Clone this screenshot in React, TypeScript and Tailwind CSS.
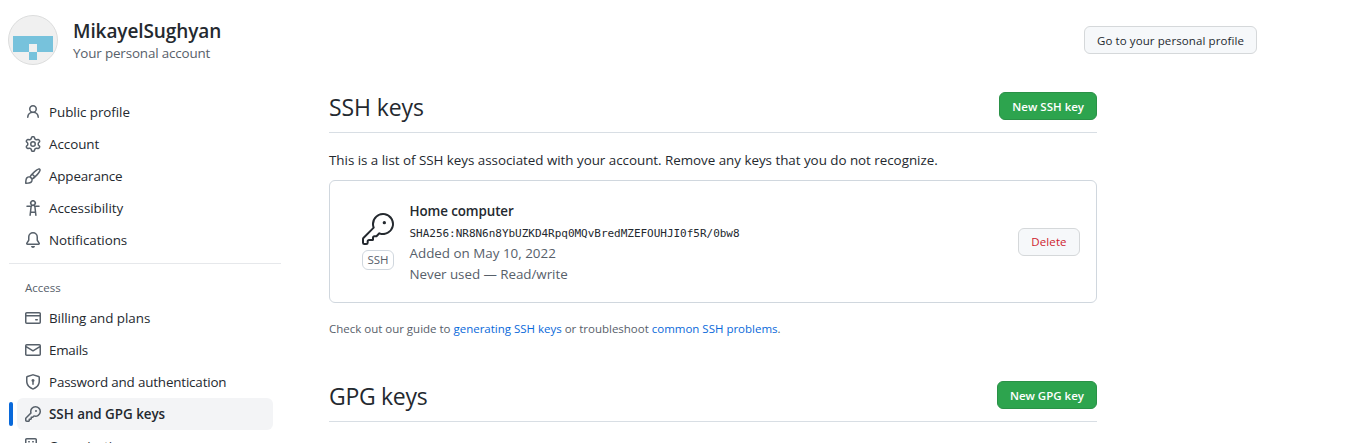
import React from "react";
import { GoKey } from "react-icons/go";

const paths = {
  person:
    "M10.561 8.073a6.005 6.005 0 0 1 3.432 5.142.75.75 0 1 1-1.498.07 4.5 4.5 0 0 0-8.99 0 .75.75 0 0 1-1.498-.07 6.004 6.004 0 0 1 3.431-5.142 3.999 3.999 0 1 1 5.123 0ZM10.5 5a2.5 2.5 0 1 0-5 0 2.5 2.5 0 0 0 5 0Z",
  gear:
    "M7.429 1.525a6.593 6.593 0 011.142 0c.036.003.108.036.137.146l.289 1.105c.147.56.55.967.997 1.189.174.086.341.183.501.29.417.278.97.423 1.53.27l1.102-.303c.11-.03.175.016.195.046.219.31.41.641.573.989.014.031.022.11-.059.19l-.815.806c-.411.406-.562.957-.53 1.456a4.588 4.588 0 010 .582c-.032.499.119 1.05.53 1.456l.815.806c.08.08.073.159.059.19a6.494 6.494 0 01-.573.99c-.02.029-.086.074-.195.045l-1.103-.303c-.559-.153-1.112-.008-1.529.27-.16.107-.327.204-.5.29-.449.222-.851.628-.998 1.189l-.289 1.105c-.029.11-.101.143-.137.146a6.613 6.613 0 01-1.142 0c-.036-.003-.108-.037-.137-.146l-.289-1.105c-.147-.56-.55-.967-.997-1.189a4.502 4.502 0 01-.501-.29c-.417-.278-.97-.423-1.53-.27l-1.102.303c-.11.03-.175-.016-.195-.046a6.492 6.492 0 01-.573-.989c-.014-.031-.022-.11.059-.19l.815-.806c.411-.406.562-.957.53-1.456a4.587 4.587 0 010-.582c.032-.499-.119-1.05-.53-1.456l-.815-.806c-.08-.08-.073-.159-.059-.19a6.44 6.44 0 01.573-.99c.02-.029.086-.075.195-.045l1.103.303c.559.153 1.112.008 1.529-.27.16-.107.327-.204.5-.29.449-.222.851-.628.998-1.189l.289-1.105c.029-.11.101-.143.137-.146zM8 0c-.236 0-.47.01-.701.03-.743.065-1.29.615-1.458 1.261l-.29 1.106c-.017.066-.078.158-.211.224a5.994 5.994 0 00-.668.386c-.123.082-.233.09-.3.071L3.27 2.776c-.644-.177-1.392.02-1.82.63a7.977 7.977 0 00-.704 1.217c-.315.675-.111 1.422.363 1.891l.815.806c.05.048.098.147.088.294a6.084 6.084 0 000 .772c.01.147-.038.246-.088.294l-.815.806c-.474.469-.678 1.216-.363 1.891.2.428.436.835.704 1.218.428.609 1.176.806 1.82.63l1.103-.303c.066-.019.176-.011.299.071.213.143.436.272.668.386.133.066.194.158.212.224l.289 1.106c.169.646.715 1.196 1.458 1.26a8.094 8.094 0 001.402 0c.743-.064 1.29-.614 1.458-1.26l.29-1.106c.017-.066.078-.158.211-.224a5.98 5.98 0 00.668-.386c.123-.082.233-.09.3-.071l1.102.302c.644.177 1.392-.02 1.82-.63.268-.382.505-.789.704-1.217.315-.675.111-1.422-.364-1.891l-.814-.806c-.05-.048-.098-.147-.088-.294a6.1 6.1 0 000-.772c-.01-.147.039-.246.088-.294l.814-.806c.475-.469.679-1.216.364-1.891a7.992 7.992 0 00-.704-1.218c-.428-.609-1.176-.806-1.82-.63l-1.103.303c-.066.019-.176.011-.299-.071a5.991 5.991 0 00-.668-.386c-.133-.066-.194-.158-.212-.224L10.16 1.29C9.99.645 9.444.095 8.701.031A8.094 8.094 0 008 0zm1.5 8a1.5 1.5 0 11-3 0 1.5 1.5 0 013 0zM11 8a3 3 0 11-6 0 3 3 0 016 0z",
  brush:
    "M11.134 1.535C9.722 2.562 8.16 4.057 6.889 5.312 5.8 6.387 5.041 7.401 4.575 8.294a3.745 3.745 0 00-3.227 1.054c-.43.431-.69 1.066-.86 1.657a11.982 11.982 0 00-.358 1.914A21.263 21.263 0 000 15.203v.054l.75-.007-.007.75h.054a14.404 14.404 0 00.654-.012 21.243 21.243 0 001.63-.118c.62-.07 1.3-.18 1.914-.357.592-.17 1.226-.43 1.657-.861a3.745 3.745 0 001.055-3.217c.908-.461 1.942-1.216 3.04-2.3 1.279-1.262 2.764-2.825 3.775-4.249.501-.706.923-1.428 1.125-2.096.2-.659.235-1.469-.368-2.07-.606-.607-1.42-.55-2.069-.34-.66.213-1.376.646-2.076 1.155zm-3.95 8.48a3.76 3.76 0 00-1.19-1.192 9.758 9.758 0 011.161-1.607l1.658 1.658a9.853 9.853 0 01-1.63 1.142zM.742 16l.007-.75-.75.008A.75.75 0 00.743 16zM12.016 2.749c-1.224.89-2.605 2.189-3.822 3.384l1.718 1.718c1.21-1.205 2.51-2.597 3.387-3.833.47-.662.78-1.227.912-1.662.134-.444.032-.551.009-.575h-.001V1.78c-.014-.014-.112-.113-.548.027-.432.14-.995.462-1.655.942zM1.62 13.089a19.56 19.56 0 00-.104 1.395 19.55 19.55 0 001.396-.104 10.528 10.528 0 001.668-.309c.526-.151.856-.325 1.011-.48a2.25 2.25 0 00-3.182-3.182c-.155.155-.329.485-.48 1.01a10.515 10.515 0 00-.309 1.67z",
  accessibility:
    "M9.923 5.302c.063.063.122.129.178.198H14A.75.75 0 0 1 14 7h-3.3l.578 5.163.362 2.997a.75.75 0 0 1-1.49.18L9.868 13H6.132l-.282 2.34a.75.75 0 0 1-1.49-.18l.362-2.997L5.3 7H2a.75.75 0 0 1 0-1.5h3.9a2.54 2.54 0 0 1 .176-.198 3 3 0 1 1 3.847 0ZM9.2 7.073h-.001a1.206 1.206 0 0 0-2.398 0L6.305 11.5h3.39ZM9.5 3a1.5 1.5 0 1 0-3.001.001A1.5 1.5 0 0 0 9.5 3Z",
  bell:
    "M8 16a2 2 0 001.985-1.75c.017-.137-.097-.25-.235-.25h-3.5c-.138 0-.252.113-.235.25A2 2 0 008 16zM3 5a5 5 0 0110 0v2.947c0 .05.015.098.042.139l1.703 2.555A1.518 1.518 0 0113.482 13H2.518a1.518 1.518 0 01-1.263-2.36l1.703-2.554A.25.25 0 003 7.947V5zm5-3.5A3.5 3.5 0 004.5 5v2.947c0 .346-.102.683-.294.97l-1.703 2.556a.018.018 0 00-.003.01l.001.006c0 .002.002.004.004.006a.017.017 0 00.006.004l.007.001h10.964l.007-.001a.016.016 0 00.006-.004.016.016 0 00.004-.006l.001-.007a.017.017 0 00-.003-.01l-1.703-2.554a1.75 1.75 0 01-.294-.97V5A3.5 3.5 0 008 1.5z",
  card:
    "M10.75 9a.75.75 0 000 1.5h1.5a.75.75 0 000-1.5h-1.5zM0 3.75C0 2.784.784 2 1.75 2h12.5c.966 0 1.75.784 1.75 1.75v8.5A1.75 1.75 0 0114.25 14H1.75A1.75 1.75 0 010 12.25v-8.5zm14.5 0V5h-13V3.75a.25.25 0 01.25-.25h12.5a.25.25 0 01.25.25zm0 2.75h-13v5.75c0 .138.112.25.25.25h12.5a.25.25 0 00.25-.25V6.5z",
  mail:
    "M1.75 2A1.75 1.75 0 000 3.75v.736a.75.75 0 000 .027v7.737C0 13.216.784 14 1.75 14h12.5A1.75 1.75 0 0016 12.25v-8.5A1.75 1.75 0 0014.25 2H1.75zM14.5 4.07v-.32a.25.25 0 00-.25-.25H1.75a.25.25 0 00-.25.25v.32L8 7.88l6.5-3.81zm-13 1.74v6.441c0 .138.112.25.25.25h12.5a.25.25 0 00.25-.25V5.809L8.38 9.397a.75.75 0 01-.76 0L1.5 5.809z",
  shield:
    "M8.533.133a1.75 1.75 0 00-1.066 0l-5.25 1.68A1.75 1.75 0 001 3.48V7c0 1.566.32 3.182 1.303 4.682.983 1.498 2.585 2.813 5.032 3.855a1.7 1.7 0 001.33 0c2.447-1.042 4.049-2.357 5.032-3.855C14.68 10.182 15 8.566 15 7V3.48a1.75 1.75 0 00-1.217-1.667L8.533.133zm-.61 1.429a.25.25 0 01.153 0l5.25 1.68a.25.25 0 01.174.238V7c0 1.358-.275 2.666-1.057 3.86-.784 1.194-2.121 2.34-4.366 3.297a.2.2 0 01-.154 0c-2.245-.956-3.582-2.104-4.366-3.298C2.775 9.666 2.5 8.36 2.5 7V3.48a.25.25 0 01.174-.237l5.25-1.68zM9.5 6.5a1.5 1.5 0 01-.75 1.3v2.45a.75.75 0 01-1.5 0V7.8A1.5 1.5 0 119.5 6.5z",
  key:
    "M6.5 5.5a4 4 0 112.731 3.795.75.75 0 00-.768.18L7.44 10.5H6.25a.75.75 0 00-.75.75v1.19l-.06.06H4.25a.75.75 0 00-.75.75v1.19l-.06.06H1.75a.25.25 0 01-.25-.25v-1.69l5.024-5.023a.75.75 0 00.181-.768A3.995 3.995 0 016.5 5.5zm4-5.5a5.5 5.5 0 00-5.348 6.788L.22 11.72a.75.75 0 00-.22.53v2C0 15.216.784 16 1.75 16h2a.75.75 0 00.53-.22l.5-.5a.75.75 0 00.22-.53V14h.75a.75.75 0 00.53-.22l.5-.5a.75.75 0 00.22-.53V12h.75a.75.75 0 00.53-.22l.932-.932A5.5 5.5 0 1010.5 0zm.5 6a1 1 0 100-2 1 1 0 000 2z",
  organization:
    "M1.75 0h8.5C11.216 0 12 .784 12 1.75V16H0V1.75C0 .784.784 0 1.75 0zm0 1.5a.25.25 0 00-.25.25V14.5h9V1.75a.25.25 0 00-.25-.25zM3.75 3h.5a.75.75 0 010 1.5h-.5a.75.75 0 010-1.5zm4 0h.5a.75.75 0 010 1.5h-.5a.75.75 0 010-1.5zm-4 3h.5a.75.75 0 010 1.5h-.5a.75.75 0 010-1.5zm4 0h.5a.75.75 0 010 1.5h-.5a.75.75 0 010-1.5z",
};

type IconName = keyof typeof paths;

function Icon({ name }: { name: IconName }) {
  return (
    <svg viewBox="0 0 16 16" className="size-4 shrink-0 fill-[#57606a]">
      <path fillRule="evenodd" d={paths[name]} />
    </svg>
  );
}

type Item = { icon: IconName; label: string; track: string; active?: boolean };

const general: Item[] = [
  { icon: "person", label: "Public profile", track: "tracking-[-0.05px]" },
  { icon: "gear", label: "Account", track: "tracking-[-0.05px]" },
  { icon: "brush", label: "Appearance", track: "tracking-[-0.15px]" },
  { icon: "accessibility", label: "Accessibility", track: "tracking-[-0.05px]" },
  { icon: "bell", label: "Notifications", track: "tracking-[-0.05px]" },
];

const access: Item[] = [
  { icon: "card", label: "Billing and plans", track: "tracking-[-0.05px]" },
  { icon: "mail", label: "Emails", track: "tracking-[-0.25px]" },
  { icon: "shield", label: "Password and authentication", track: "tracking-[-0.17px]" },
  { icon: "key", label: "SSH and GPG keys", track: "tracking-[-0.03px]", active: true },
  { icon: "organization", label: "Organizations", track: "tracking-[-0.1px]" },
];

function NavItem({ icon, label, track, active }: Item) {
  return (
    <li className="flex h-8 items-center">
      <span className={active ? "h-6 w-1 rounded-md bg-[#0969da]" : "h-6 w-1"} />
      <a
        className={
          active
            ? "ml-1 flex h-8 w-64 shrink-0 items-center gap-2 rounded-md bg-[#f3f4f6] px-2 font-semibold"
            : "ml-1 flex h-8 w-64 shrink-0 items-center gap-2 px-2"
        }
      >
        <Icon name={icon} />
        <span className={`whitespace-nowrap leading-5 ${track}`}>{label}</span>
      </a>
    </li>
  );
}

function SectionHead({ title, action, track }: { title: string; action: string; track: string }) {
  return (
    <div className="flex h-[41px] items-start justify-between border-b border-[#d8dee4]">
      <h2 className={`text-[23px] leading-[30px] ${track}`}>{title}</h2>
      <button className="h-7 rounded-md border border-[#2a9147] bg-[#2da44e] px-3 pt-px text-[11.5px] font-semibold whitespace-nowrap text-white">
        {action}
      </button>
    </div>
  );
}

export default function App() {
  return (
    <div className="h-[443px] w-[1367px] overflow-hidden bg-white font-['Open_Sans','Noto_Sans',sans-serif] text-[13.4px] text-[#24292f]">
      <header className="flex h-24 items-start pt-[15px] pl-2">
        <svg viewBox="0 0 50 50" className="size-[50px]">
          <circle cx="25" cy="25" r="24.5" fill="#f0f0f0" stroke="#dcdddd" />
          <path fill="#77c2dc" d="M5 21h40v16H29v-8h-8v8H5zM21 37h8v8h-8z" />
        </svg>
        <div className="ml-[15px] pt-[3px]">
          <h1 className="text-[19px] leading-[26px] font-semibold tracking-[-0.1px]">MikayelSughyan</h1>
          <p className="leading-[18px] tracking-[-0.15px] text-[#57606a]">Your personal account</p>
        </div>
        <button className="mt-[11px] mr-[110px] ml-auto h-7 w-[173px] rounded-md border border-[#d5d8da] bg-[#f6f8fa] pt-px text-[11.5px] font-medium tracking-[0.1px] whitespace-nowrap">
          Go to your personal profile
        </button>
      </header>
      <div className="flex items-start">
        <nav className="w-[281px] pl-[9px]">
          <ul>
            {general.map((item) => (
              <NavItem key={item.label} {...item} />
            ))}
          </ul>
          <div className="mt-[7px] h-px bg-[#e6e8eb]" />
          <h3 className="h-[38px] pt-[15px] pl-4 text-[11.5px] leading-[18px] font-medium text-[#57606a]">Access</h3>
          <ul>
            {access.map((item) => (
              <NavItem key={item.label} {...item} />
            ))}
          </ul>
        </nav>
        <main className="-mt-1 ml-12 w-[768px]">
          <SectionHead title="SSH keys" action="New SSH key" track="tracking-[-0.1px]" />
          <p className="mt-[17px] leading-[21px] tracking-[-0.03px] whitespace-nowrap">
            This is a list of SSH keys associated with your account. Remove any keys that you do not recognize.
          </p>
          <div className="mt-[9px] flex h-[123px] items-center rounded-md border border-[#d0d7de] pr-4 pl-8">
            <div className="flex w-8 flex-col items-center gap-[5px]">
              <GoKey className="size-8" />
              <span className="flex h-5 w-8 items-center justify-center rounded-md border border-[#d0d7de] text-[11.5px] text-[#57606a]">
                SSH
              </span>
            </div>
            <div className="ml-[15.5px] flex flex-col pt-[3px] text-[#57606a]">
              <strong className="h-[22px] leading-[21px] font-semibold tracking-[-0.1px] text-[#24292f]">
                Home computer
              </strong>
              <code className="h-5 font-['DejaVu_Sans_Mono',monospace] text-[11px] leading-[21px] tracking-[-0.022px] text-[#24292f]">
                SHA256:NR8N6n8YbUZKD4Rpq0MQvBredMZEFOUHJI0f5R/0bw8
              </code>
              <span className="leading-[21px]">Added on May 10, 2022</span>
              <span className="leading-[21px] tracking-[-0.05px]">Never used — Read/write</span>
            </div>
            <button className="ml-auto h-7 w-[62px] rounded-md border border-[#d5d8da] bg-[#f6f8fa] pt-px text-[11.5px] font-medium tracking-[0.1px] text-[#cf222e]">
              Delete
            </button>
          </div>
          <p className="mt-[17px] text-[11.5px] leading-[18px] tracking-[-0.01px] whitespace-nowrap text-[#57606a]">
            Check out our guide to <a className="text-[#0969da]">generating SSH keys</a> or troubleshoot{" "}
            <a className="text-[#0969da]">common SSH problems</a>.
          </p>
          <div className="mt-[43px]">
            <SectionHead title="GPG keys" action="New GPG key" track="tracking-[-0.3px]" />
          </div>
        </main>
      </div>
    </div>
  );
}
